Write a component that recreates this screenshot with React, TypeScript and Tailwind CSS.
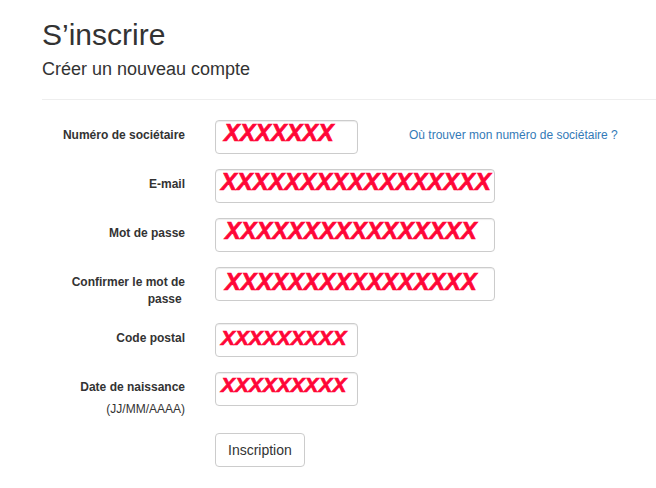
type Field = {
  label: React.ReactNode;
  count: number;
  wide: boolean;
  size: string;
  pos: string;
  extra?: React.ReactNode;
};

const fields: Field[] = [
  {
    label: 'Numéro de sociétaire',
    count: 7,
    wide: false,
    size: 'text-[23.5px]',
    pos: 'top-[1px] left-[8px]',
    extra: (
      <a href="#" className="ml-[51px] pt-[7px] text-[12px] leading-[17px] text-[#337ab7]">
        Où trouver mon numéro de sociétaire ?
      </a>
    ),
  },
  { label: 'E-mail', count: 17, wide: true, size: 'text-[23.8px]', pos: 'top-[0px] left-[5px]' },
  { label: 'Mot de passe', count: 16, wide: true, size: 'text-[23.6px]', pos: 'top-[1px] left-[9px]' },
  {
    label: 'Confirmer le mot de passe\u00a0',
    count: 16,
    wide: true,
    size: 'text-[23.6px]',
    pos: 'top-[3px] left-[9px]',
  },
  { label: 'Code postal', count: 9, wide: false, size: 'text-[20.9px]', pos: 'top-[4px] left-[5px]' },
  {
    label: (
      <>
        Date de naissance
        <span className="mt-[5px] block font-normal">(JJ/MM/AAAA)</span>
      </>
    ),
    count: 9,
    wide: false,
    size: 'text-[20.9px]',
    pos: 'top-[2px] left-[5px]',
  },
];

function Row({ f }: { f: Field }) {
  return (
    <div className="mb-[15px] flex">
      <label className="w-[158px] shrink-0 pr-[15px] pt-[7px] text-right text-[12px] font-bold leading-[17px] text-[#333]">
        {f.label}
      </label>
      <div className="flex items-start pl-[15px]">
        <div
          className={`relative h-[34px] ${f.wide ? 'w-[280px]' : 'w-[143px]'} rounded-[4px] border border-[#ccc] bg-white shadow-[inset_0_1px_1px_rgba(0,0,0,0.075)]`}
        >
          <span
            className={`absolute ${f.pos} ${f.size} whitespace-nowrap font-bold italic leading-none text-[#ff0637] [-webkit-text-stroke:0.7px_#ff0637]`}
          >
            {'X'.repeat(f.count)}
          </span>
        </div>
        {f.extra}
      </div>
    </div>
  );
}

export default function App() {
  return (
    <div className="min-h-screen overflow-hidden bg-white pl-[42px] text-[#333] [font-family:'Liberation_Sans',Arial,sans-serif]">
      <h2 className="mt-[18px] text-[30px] leading-[33px] font-normal">S’inscrire</h2>
      <p className="mt-[8px] text-[18px] leading-[20px]">Créer un nouveau compte</p>
      <hr className="mt-[20px] mb-[20px] w-[700px] border-0 border-t border-[#eee]" />
      <form>
        {fields.map((f, i) => (
          <Row key={i} f={f} />
        ))}
        <div className="flex">
          <div className="w-[158px] shrink-0" />
          <div className="pl-[15px]">
            <button
              type="button"
              className="h-[34px] rounded-[4px] border border-[#ccc] bg-white px-[12px] text-[14px] text-[#333]"
            >
              Inscription
            </button>
          </div>
        </div>
      </form>
    </div>
  );
}
